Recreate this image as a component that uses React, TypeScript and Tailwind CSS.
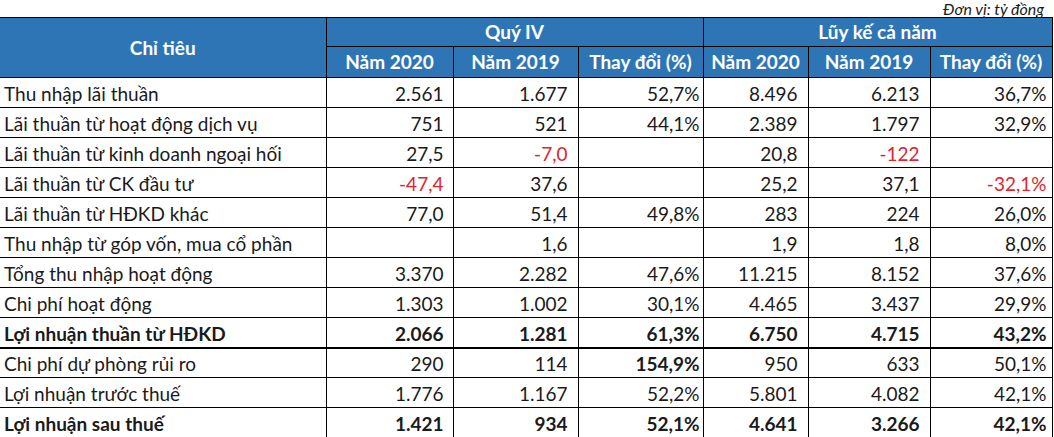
import React from "react"

type Row = {
  label: string
  bold?: boolean
  thick?: boolean
  cells: { v: string; red?: boolean; bold?: boolean }[]
}

const c = (v: string, red = false, bold = false) => ({ v, red, bold })

const rows: Row[] = [
  { label: "Thu nhập lãi thuần", cells: [c("2.561"), c("1.677"), c("52,7%"), c("8.496"), c("6.213"), c("36,7%")] },
  { label: "Lãi thuần từ hoạt động dịch vụ", cells: [c("751"), c("521"), c("44,1%"), c("2.389"), c("1.797"), c("32,9%")] },
  { label: "Lãi thuần từ kinh doanh ngoại hối", cells: [c("27,5"), c("-7,0", true), c(""), c("20,8"), c("-122", true), c("")] },
  { label: "Lãi thuần từ CK đầu tư", cells: [c("-47,4", true), c("37,6"), c(""), c("25,2"), c("37,1"), c("-32,1%", true)] },
  { label: "Lãi thuần từ HĐKD khác", cells: [c("77,0"), c("51,4"), c("49,8%"), c("283"), c("224"), c("26,0%")] },
  { label: "Thu nhập từ góp vốn, mua cổ phần", cells: [c(""), c("1,6"), c(""), c("1,9"), c("1,8"), c("8,0%")] },
  { label: "Tổng thu nhập hoạt động", cells: [c("3.370"), c("2.282"), c("47,6%"), c("11.215"), c("8.152"), c("37,6%")] },
  { label: "Chi phí hoạt động", cells: [c("1.303"), c("1.002"), c("30,1%"), c("4.465"), c("3.437"), c("29,9%")] },
  { label: "Lợi nhuận thuần từ HĐKD", bold: true, thick: true, cells: [c("2.066"), c("1.281"), c("61,3%"), c("6.750"), c("4.715"), c("43,2%")] },
  { label: "Chi phí dự phòng rủi ro", cells: [c("290"), c("114"), c("154,9%", false, true), c("950"), c("633"), c("50,1%")] },
  { label: "Lợi nhuận trước thuế", cells: [c("1.776"), c("1.167"), c("52,2%"), c("5.801"), c("4.082"), c("42,1%")] },
  { label: "Lợi nhuận sau thuế", bold: true, cells: [c("1.421"), c("934"), c("52,1%"), c("4.641"), c("3.266"), c("42,1%")] },
]

// right padding per numeric column
const pads = ["pr-[9px]", "pr-[10px]", "pr-[3px]", "pr-[10px]", "pr-[10px]", "pr-[5px]"]

export default function App() {
  return (
    <div className="w-[1054px] h-[437px] bg-white overflow-hidden font-['Lato','Liberation_Sans',sans-serif] text-[#1a1a1a]">
      <div className="h-[17px] flex justify-end pr-[10px] text-[16px] leading-[18px] italic">
        Đơn vị: tỷ đồng
      </div>
      <table className="border-collapse table-fixed w-[1052px] text-[19px]">
        <colgroup>
          <col className="w-[326px]" />
          <col className="w-[127px]" />
          <col className="w-[125px]" />
          <col className="w-[125px]" />
          <col className="w-[105px]" />
          <col className="w-[122px]" />
          <col className="w-[122px]" />
        </colgroup>
        <thead className="bg-[#2e75b6] text-white font-bold text-[19px] leading-[22px]">
          <tr className="h-[29px]">
            <th rowSpan={2} className="border-y border-r border-black text-center p-0">Chỉ tiêu</th>
            <th colSpan={3} className="border border-black text-center p-0">Quý IV</th>
            <th colSpan={3} className="border border-black text-center p-0">Lũy kế cả năm</th>
          </tr>
          <tr className="h-[31px]">
            {["Năm 2020", "Năm 2019", "Thay đổi (%)", "Năm 2020", "Năm 2019", "Thay đổi (%)"].map((h, i) => (
              <th key={i} className="border border-black text-center whitespace-nowrap p-0">{h}</th>
            ))}
          </tr>
        </thead>
        <tbody className="leading-[24px]">
          {rows.map((r) => (
            <tr key={r.label} className={`h-[30px] ${r.bold ? "font-bold" : ""}`}>
              <td className={`border-r border-black pl-[4px] pt-[3px] pb-0 whitespace-nowrap ${r.thick ? "border-b-2" : "border-b"}`}>
                {r.label}
              </td>
              {r.cells.map((cell, i) => (
                <td
                  key={i}
                  className={`border-x border-black text-right pt-[3px] pb-0 whitespace-nowrap ${pads[i]} ${r.thick ? "border-b-2" : "border-b"} ${cell.red ? "text-[#e0242c]" : ""} ${cell.bold ? "font-bold" : ""}`}
                >
                  {cell.v}
                </td>
              ))}
            </tr>
          ))}
        </tbody>
      </table>
    </div>
  )
}
